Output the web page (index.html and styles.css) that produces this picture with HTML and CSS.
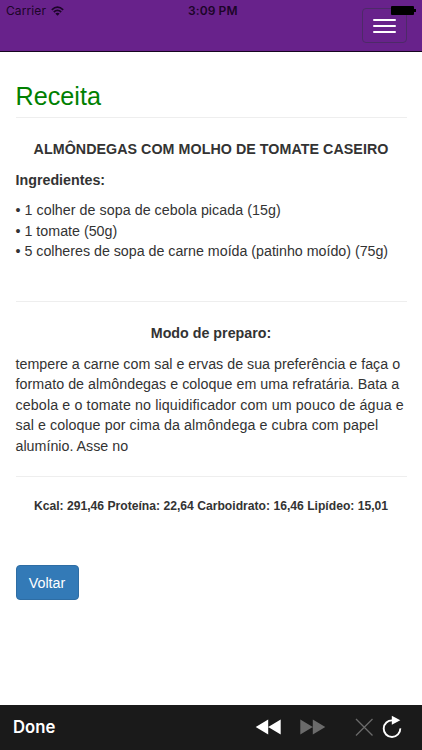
FILE: index.html
```html
<!DOCTYPE html>
<html lang="pt-BR">

<head>
    <meta charset="utf-8">
    <title>Receita</title>
    <link rel="stylesheet" href="styles.css">
</head>

<body>
    <header class="navbar">
        <div class="status">
            <span class="carrier">Carrier</span>
            <svg class="wifi" viewBox="0 0 13 10">
                <path d="M.8 3.8Q6.5-1.4 12.2 3.8M2.8 6Q6.5 2.6 10.2 6" />
                <path class="dot" d="M4.3 7.6Q6.5 5.8 8.7 7.6L6.5 9.8z" />
            </svg>
            <span class="clock">3:09 PM</span>
        </div>
        <button class="toggle" aria-label="Menu">
            <span></span>
            <span></span>
            <span></span>
        </button>
        <div class="battery"></div>
    </header>

    <main class="content">
        <h1>Receita</h1>
        <hr>
        <p class="center"><b class="recipe">ALMÔNDEGAS COM MOLHO DE TOMATE CASEIRO</b></p>
        <p><b>Ingredientes:</b></p>
        <p class="ingredients">
            <span class="wide">• 1 colher de sopa de cebola picada (15g)</span><br>
            • 1 tomate (50g)<br>
            <span class="tight">• 5 colheres de sopa de carne moída (patinho moído) (75g)</span>
        </p>
        <hr>
        <p class="center"><b>Modo de preparo:</b></p>
        <p class="text">
            tempere a carne com sal e ervas de sua preferência e faça o<br>
            <span class="wide">formato de almôndegas e coloque em uma refratária. Bata a</span><br>
            <span class="wider">cebola e o tomate no liquidificador com um pouco de água e</span><br>
            <span class="wide-more">sal e coloque por cima da almôndega e cubra com papel</span><br>
            alumínio. Asse no
        </p>
        <hr>
        <p class="center nutrition"><b>Kcal: 291,46 Proteína: 22,64 Carboidrato: 16,46 Lipídeo: 15,01</b></p>
        <button class="back">Voltar</button>
    </main>

    <footer class="toolbar">
        <span class="done">Done</span>
        <svg class="icons" viewBox="0 0 182 45">
            <path fill="#fff" d="M15.7 22L28.2 14.4V29.6zM28.2 22L40.7 14.4V29.6z" />
            <path fill="#6b6b6b" d="M60.3 14.4L72.8 22L60.3 29.6zM72.8 14.4L85.3 22L72.8 29.6z" />
            <path fill="none" stroke="#6b6b6b" stroke-width="1.3" d="M116 14L132.5 30.5M132.5 14L116 30.5" />
            <path fill="none" stroke="#fff" stroke-width="1.9" d="M152.5 15.4A8.3 8.3 0 1 0 160.3 23.4" />
            <path fill="#fff" d="M151.8 10.8L160.3 15.3L151.8 19.8z" />
        </svg>
    </footer>
</body>

</html>
```
FILE: styles.css
```css
html,
body {
    height: 100%;
    margin: 0;
    padding: 0;
}

body {
    display: flex;
    flex-direction: column;
    background: #fff;
    color: #333;
    font-family: "Liberation Sans", Arial, sans-serif;
    font-size: 14.27px;
    line-height: 20.4px;
}

.navbar {
    position: relative;
    box-sizing: border-box;
    flex: none;
    height: 52px;
    padding: 8px 15px 0 6px;
    display: flex;
    justify-content: space-between;
    align-items: flex-start;
    background: #68228b;
    border-bottom: 1px solid #16051f;
}

.status {
    display: flex;
    align-items: center;
    height: 7px;
    color: #1c0528;
    font-family: Inter, sans-serif;
    font-size: 12px;
}

.carrier {
    width: 40px;
    letter-spacing: 0.1px;
}

.wifi {
    width: 13px;
    height: 10px;
    margin: 0 0 2px 5px;
    fill: none;
    stroke: #1c0528;
    stroke-width: 1.7;
}

.wifi .dot {
    fill: #1c0528;
    stroke: none;
}

.clock {
    margin-left: 124px;
    font-weight: 600;
    letter-spacing: 0.1px;
    white-space: nowrap;
}

.toggle {
    box-sizing: border-box;
    width: 45px;
    height: 35px;
    padding: 0 10px;
    display: flex;
    flex-direction: column;
    justify-content: center;
    gap: 4px;
    background: none;
    border: 1px solid #4d2a68;
    border-radius: 4px;
}

.toggle span {
    height: 2px;
    background: #fff;
    border-radius: 1px;
}

/* sits over the menu button */
.battery {
    position: absolute;
    top: 6px;
    right: 8px;
    width: 23px;
    height: 9px;
    background: #000;
    border-radius: 1px;
}

.battery::after {
    content: "";
    position: absolute;
    left: 23px;
    top: 3px;
    width: 2px;
    height: 3px;
    background: #000;
}

.content {
    flex: 1;
    padding: 31px 15.5px 0;
}

h1 {
    margin: 0;
    color: #008000;
    font-size: 25.2px;
    font-weight: normal;
    line-height: 27px;
}

h1 + hr {
    margin: 7px 0 21px;
}

hr {
    height: 1px;
    margin: 21px 0;
    border: 0;
    background: #eee;
}

p {
    margin: 0 0 10.2px;
    white-space: nowrap;
}

.center {
    text-align: center;
}

.recipe {
    letter-spacing: 0.05px;
}

.ingredients {
    margin-bottom: 40px;
}

.text {
    margin-bottom: 19.5px;
}

.text + hr {
    margin: 19.5px 0;
}

/* line spacing tweaks for the fallback font */
.tight {
    letter-spacing: -0.02px;
}

.wide {
    letter-spacing: 0.04px;
}

.wide-more {
    letter-spacing: 0.08px;
}

.wider {
    letter-spacing: 0.12px;
}

.nutrition {
    font-size: 12.15px;
    margin-bottom: 49px;
}

.back {
    display: block;
    box-sizing: border-box;
    width: 63px;
    height: 35px;
    padding: 0;
    color: #fff;
    background: #337ab7;
    border: 1px solid #2e6da4;
    border-radius: 4px;
    font: inherit;
}

.toolbar {
    flex: none;
    height: 45px;
    display: flex;
    align-items: center;
    justify-content: space-between;
    background: #1a1a1a;
}

.done {
    margin-left: 13px;
    color: #fff;
    font-family: Inter, sans-serif;
    font-size: 16.7px;
    font-weight: 600;
}

.icons {
    width: 182px;
    height: 45px;
}
```
